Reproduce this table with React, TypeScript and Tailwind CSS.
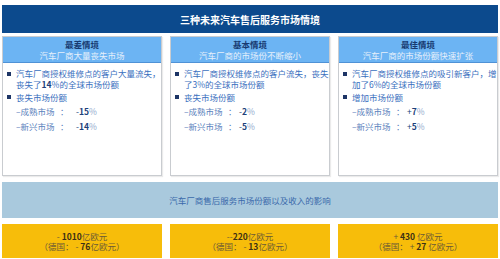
import React from 'react';

const FONT = { fontFamily: '"Noto Sans CJK SC", "Noto Sans", sans-serif' };

interface Scenario {
  title: string;
  subtitle: string;
  lines: React.ReactNode[];
  second: string;
  gap: string;
  items: { label: string; sign: string; num: string }[];
}

const scenarios: Scenario[] = [
  {
    title: '最差情境',
    subtitle: '汽车厂商大量丧失市场',
    lines: ['汽车厂商授权维修点的客户大量流失，', <>丧失了<b className="font-bold text-[#1c3f7a]">14</b>%的全球市场份额</>],
    second: '丧失市场份额',
    gap: 'ml-[6px]',
    items: [
      { label: '–成熟市场', sign: '-', num: '15' },
      { label: '–新兴市场', sign: '-', num: '14' },
    ],
  },
  {
    title: '基本情境',
    subtitle: '汽车厂商的市场份不断缩小',
    lines: ['汽车厂商授权维修点的客户流失，丧失', '了3%的全球市场份额'],
    second: '丧失市场份额',
    gap: 'ml-[1px]',
    items: [
      { label: '–成熟市场', sign: '-', num: '2' },
      { label: '–新兴市场', sign: '-', num: '5' },
    ],
  },
  {
    title: '最佳情境',
    subtitle: '汽车厂商的市场份额快速扩张',
    lines: ['汽车厂商授权维修点的吸引新客户，增', '加了6%的全球市场份额'],
    second: '增加市场份额',
    gap: 'ml-[1px]',
    items: [
      { label: '–成熟市场', sign: '+', num: '7' },
      { label: '–新兴市场', sign: '+', num: '5' },
    ],
  },
];

const impacts = [
  { a: '- ', n1: '1010', u1: '亿欧元', b: '（德国： - ', n2: '76', u2: '亿欧元）' },
  { a: '--', n1: '220', u1: '亿欧元', b: '（德国： - ', n2: '13', u2: '亿欧元）' },
  { a: '+ ', n1: '430 ', u1: '亿欧元', b: '（德国： + ', n2: '27 ', u2: '亿欧元）' },
];

function Card({ s }: { s: Scenario }) {
  return (
    <div className="h-[140px] bg-white border border-[#c9ccd0] shadow-[1px_1px_1px_rgba(0,0,0,0.08)]">
      <div className="h-[26px] bg-[#6cb4f3] border-b border-[#4f92d6] flex flex-col items-center justify-center leading-[10px]">
        <div className="text-[8.5px] font-bold text-[#173a70]">{s.title}</div>
        <div className="text-[8.5px] text-[#e6f0fb] mt-[1px]">{s.subtitle}</div>
      </div>
      <div className="pl-[4px] pt-[5px] text-[8.5px] text-[#3a6fbe]">
        <div className="flex">
          <span className="w-[4px] h-[4px] bg-[#1d3566] mt-[4px] mr-[5px] shrink-0" />
          <div className="leading-[10.5px] whitespace-nowrap">
            {s.lines.map((l, i) => (
              <div key={i}>{l}</div>
            ))}
          </div>
        </div>
        <div className="flex items-center mt-[3px] leading-[10.5px]">
          <span className="w-[4px] h-[4px] bg-[#1d3566] mr-[5px] shrink-0" />
          <span>{s.second}</span>
        </div>
        <div className="pl-[9px] mt-[1px] text-[#5b82bd]">
          {s.items.map((it) => (
            <div key={it.label} className="flex h-[15px] items-center">
              <span className="w-[44px]">{it.label}</span>
              <span className="w-[10px]">：</span>
              <span className={s.gap}>
                <span className="text-[#1c3f7a]">{it.sign}</span>
                <b className="font-bold text-[#1c3f7a]">{it.num}</b>
                <span className="text-[#8fa8cc]">%</span>
              </span>
            </div>
          ))}
        </div>
      </div>
    </div>
  );
}

export default function App() {
  return (
    <div className="w-[500px] h-[259px] bg-white px-[2px] pt-[5px] overflow-hidden" style={FONT}>
      <div className="h-[28px] bg-[#0c4a8d] flex items-center justify-center">
        <span className="text-[10px] font-bold text-white">三种未来汽车售后服务市场情境</span>
      </div>
      <div className="grid grid-cols-3 gap-[8px] mt-[3px]">
        {scenarios.map((s) => (
          <Card key={s.title} s={s} />
        ))}
      </div>
      <div className="h-[36px] mt-[6px] bg-[#a9c9dd] flex items-center justify-center">
        <span className="text-[8.5px] text-[#3b6aab]">汽车厂商售后服务市场份额以及收入的影响</span>
      </div>
      <div className="grid grid-cols-3 gap-[8px] mt-[6px]">
        {impacts.map((m, i) => (
          <div key={i} className="h-[34px] bg-[#f7bd0a] flex flex-col items-center justify-center text-[8.5px] leading-[10.5px] text-[#6b5a35]">
            <div>
              {m.a}
              <b className="font-bold text-[#3d3015]">{m.n1}</b>
              {m.u1}
            </div>
            <div>
              {m.b}
              <b className="font-bold text-[#3d3015]">{m.n2}</b>
              {m.u2}
            </div>
          </div>
        ))}
      </div>
    </div>
  );
}
